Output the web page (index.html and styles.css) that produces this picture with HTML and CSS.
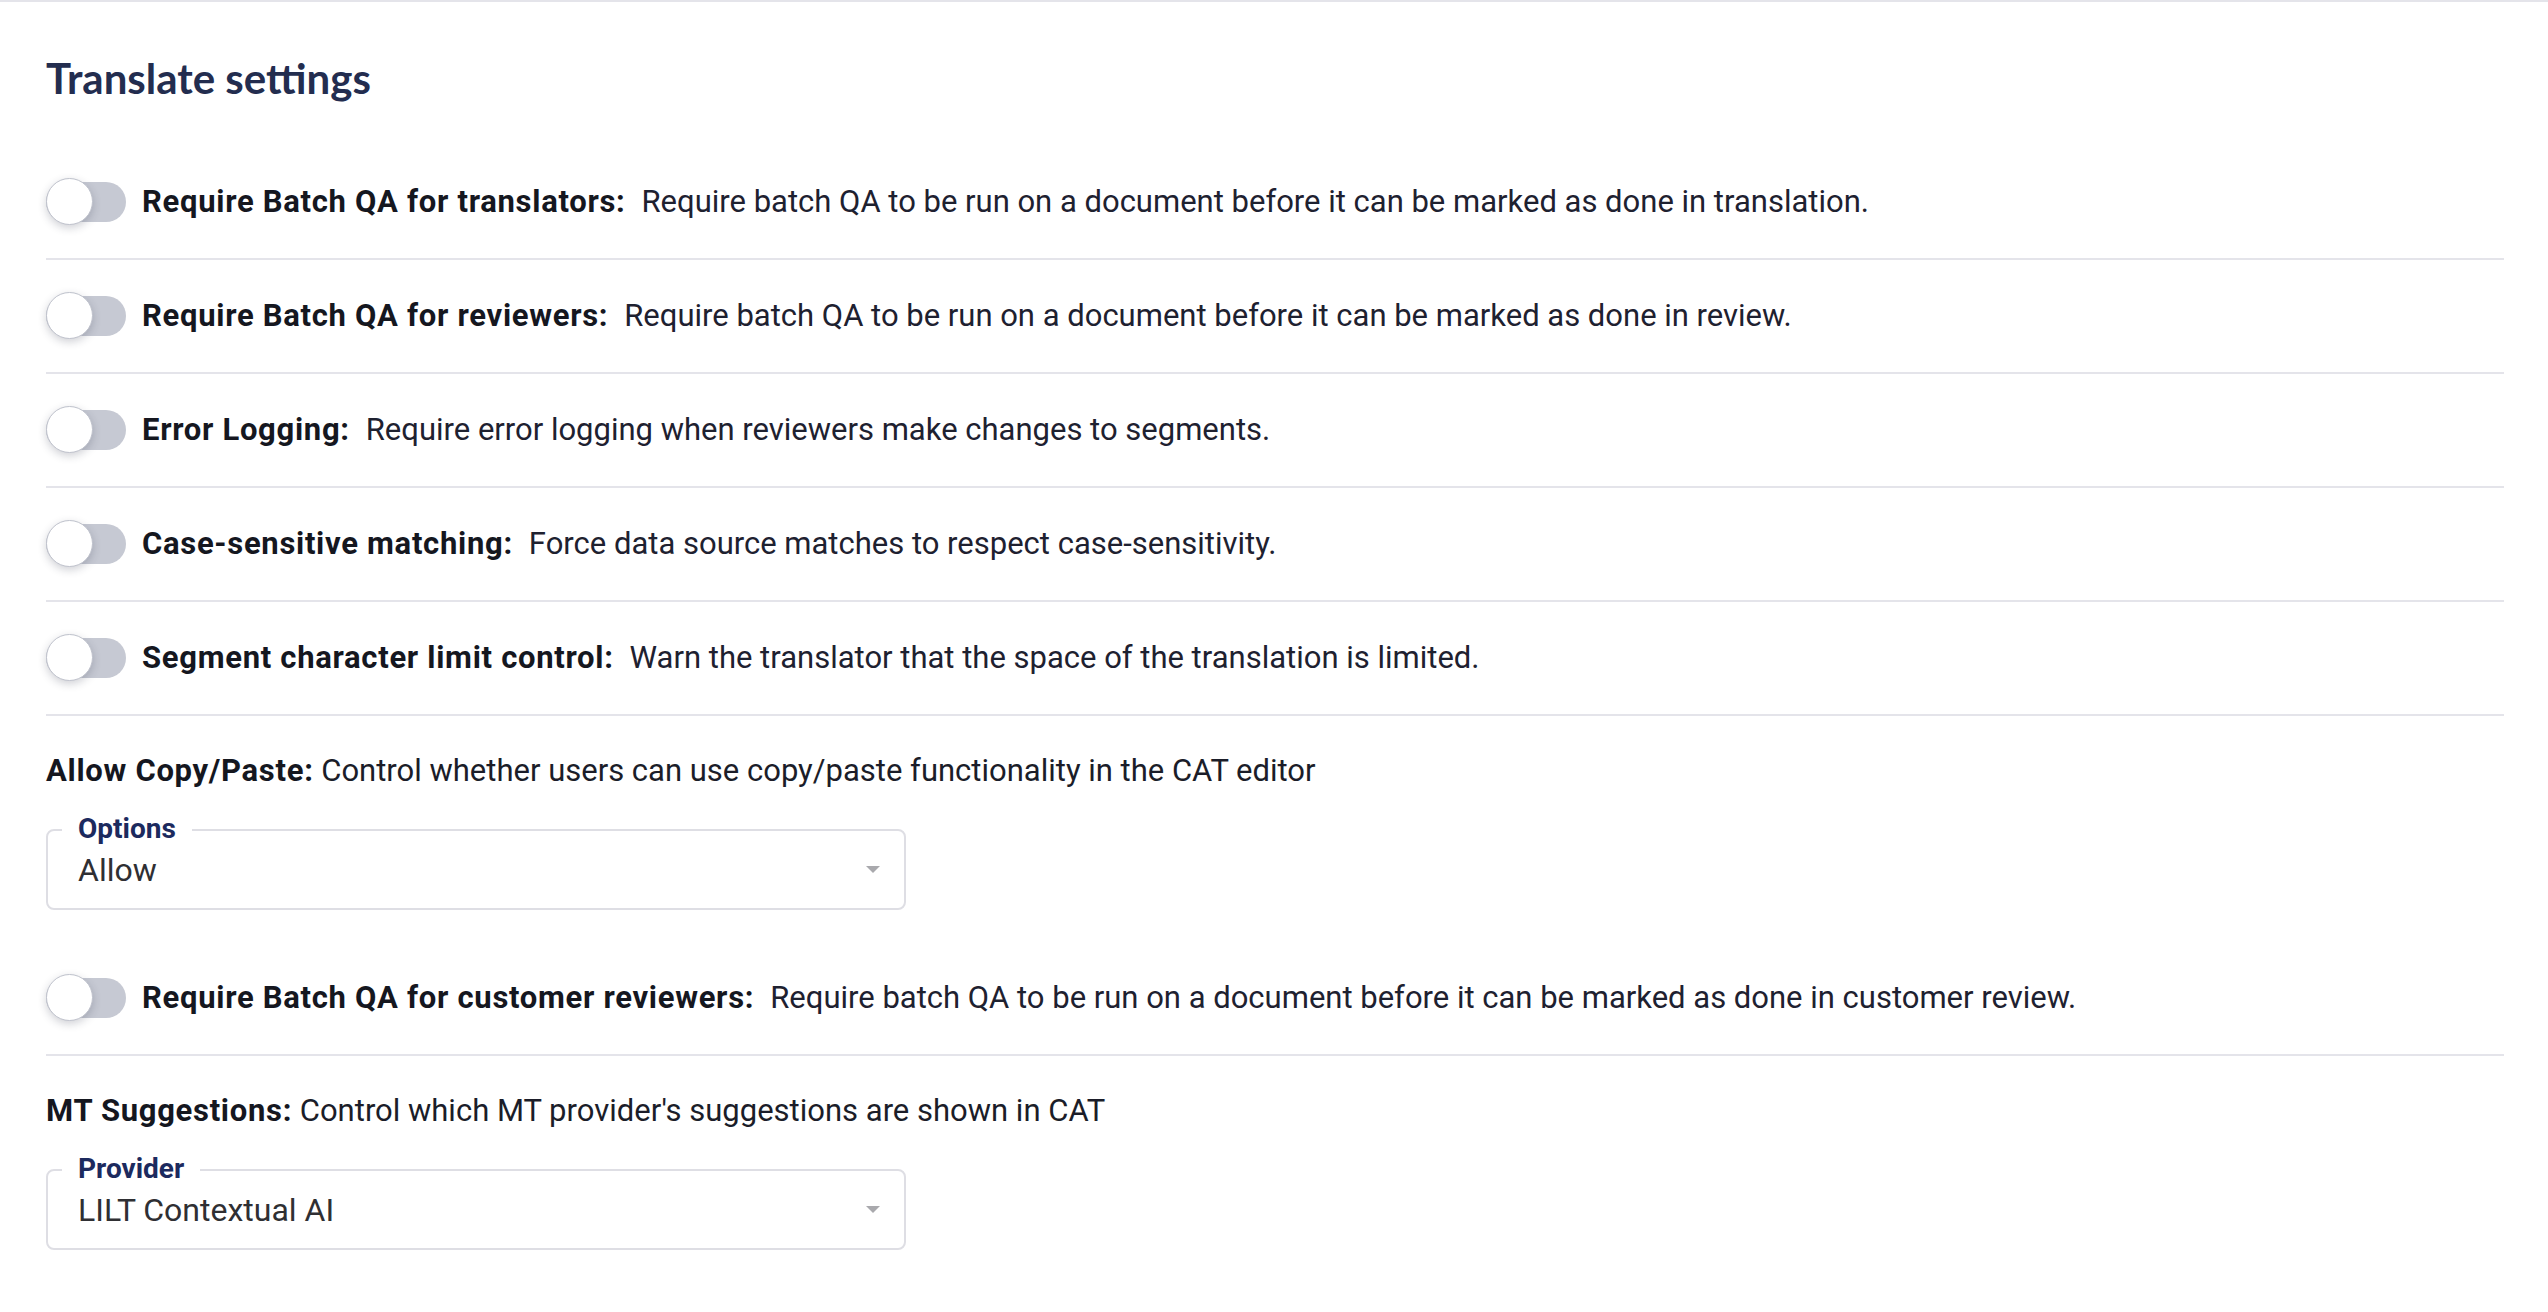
FILE: index.html
```html
<!DOCTYPE html>
<html lang="en">
<head>
<meta charset="utf-8">
<title>Translate settings</title>
<link rel="stylesheet" href="styles.css">
</head>
<body>
<div class="page">
  <h1 class="title">Translate settings</h1>

  <div class="row">
    <span class="toggle"><span class="knob"></span></span>
    <p class="text"><b class="label">Require Batch QA for translators:</b><span class="desc">Require batch QA to be run on a document before it can be marked as done in translation.</span></p>
  </div>
  <div class="row">
    <span class="toggle"><span class="knob"></span></span>
    <p class="text"><b class="label">Require Batch QA for reviewers:</b><span class="desc">Require batch QA to be run on a document before it can be marked as done in review.</span></p>
  </div>
  <div class="row">
    <span class="toggle"><span class="knob"></span></span>
    <p class="text"><b class="label">Error Logging:</b><span class="desc">Require error logging when reviewers make changes to segments.</span></p>
  </div>
  <div class="row">
    <span class="toggle"><span class="knob"></span></span>
    <p class="text"><b class="label">Case-sensitive matching:</b><span class="desc">Force data source matches to respect case-sensitivity.</span></p>
  </div>
  <div class="row">
    <span class="toggle"><span class="knob"></span></span>
    <p class="text"><b class="label">Segment character limit control:</b><span class="desc">Warn the translator that the space of the translation is limited.</span></p>
  </div>

  <div class="select-block">
    <p class="select-text"><b>Allow Copy/Paste:</b> Control whether users can use copy/paste functionality in the CAT editor</p>
    <div class="field">
      <span class="field-label">Options</span>
      <span class="field-value">Allow</span>
      <span class="arrow"></span>
    </div>
  </div>

  <div class="row">
    <span class="toggle"><span class="knob"></span></span>
    <p class="text"><b class="label">Require Batch QA for customer reviewers:</b><span class="desc">Require batch QA to be run on a document before it can be marked as done in customer review.</span></p>
  </div>

  <div class="select-block">
    <p class="select-text"><b>MT Suggestions:</b> Control which MT provider's suggestions are shown in CAT</p>
    <div class="field">
      <span class="field-label">Provider</span>
      <span class="field-value">LILT Contextual AI</span>
      <span class="arrow"></span>
    </div>
  </div>
</div>
</body>
</html>
```

FILE: styles.css
```css
html, body {
  margin: 0;
  padding: 0;
  background: #ffffff;
}
body {
  border-top: 2px solid #e4e4ea;
  font-family: Roboto, "Liberation Sans", sans-serif;
  color: #1b1d29;
}
.page {
  padding: 0 44px 40px 46px;
}
.title {
  margin: 52px 0 44px;
  font-family: Lato, "Open Sans", sans-serif;
  font-weight: 700;
  font-size: 42px;
  line-height: 48px;
  color: #232d4f;
}
.row {
  display: flex;
  align-items: center;
  height: 112px;
  border-bottom: 2px solid #e4e4ea;
}
.toggle {
  position: relative;
  flex: none;
  width: 80px;
  height: 40px;
  border-radius: 20px;
  background: #c6c9d3;
  margin-right: 16px;
}
.knob {
  position: absolute;
  left: 0;
  top: -4px;
  width: 45px;
  height: 45px;
  border-radius: 50%;
  background: #ffffff;
  border: 1px solid #bfc2cc;
  box-shadow: 0 3px 8px rgba(40, 45, 70, 0.22);
}
.text {
  margin: 0;
  font-size: 31px;
  line-height: 36px;
  white-space: nowrap;
}
.label {
  font-weight: 700;
  color: #15171f;
  letter-spacing: 0.7px;
  margin-right: 16px;
}
.desc {
  color: #1e2130;
}
.select-block {
  padding-top: 40px;
  padding-bottom: 32px;
}
.select-text {
  margin: 0 0 43px;
  font-size: 31px;
  line-height: 30px;
  white-space: nowrap;
}
.select-text b {
  color: #15171f;
  letter-spacing: 0.7px;
}
.field {
  position: relative;
  display: flex;
  align-items: center;
  box-sizing: border-box;
  width: 860px;
  height: 81px;
  border: 2px solid #dedee4;
  border-radius: 8px;
  padding: 0 24px 0 30px;
}
.field-label {
  position: absolute;
  left: 14px;
  top: -17px;
  padding: 0 16px;
  background: #ffffff;
  font-size: 28px;
  line-height: 30px;
  font-weight: 700;
  color: #1c2a5e;
}
.field-value {
  flex: 1;
  font-size: 32px;
  line-height: 36px;
  color: #2f2f33;
}
.arrow {
  width: 0;
  height: 0;
  border-left: 7px solid transparent;
  border-right: 7px solid transparent;
  border-top: 7px solid #a9a9ad;
}
```
